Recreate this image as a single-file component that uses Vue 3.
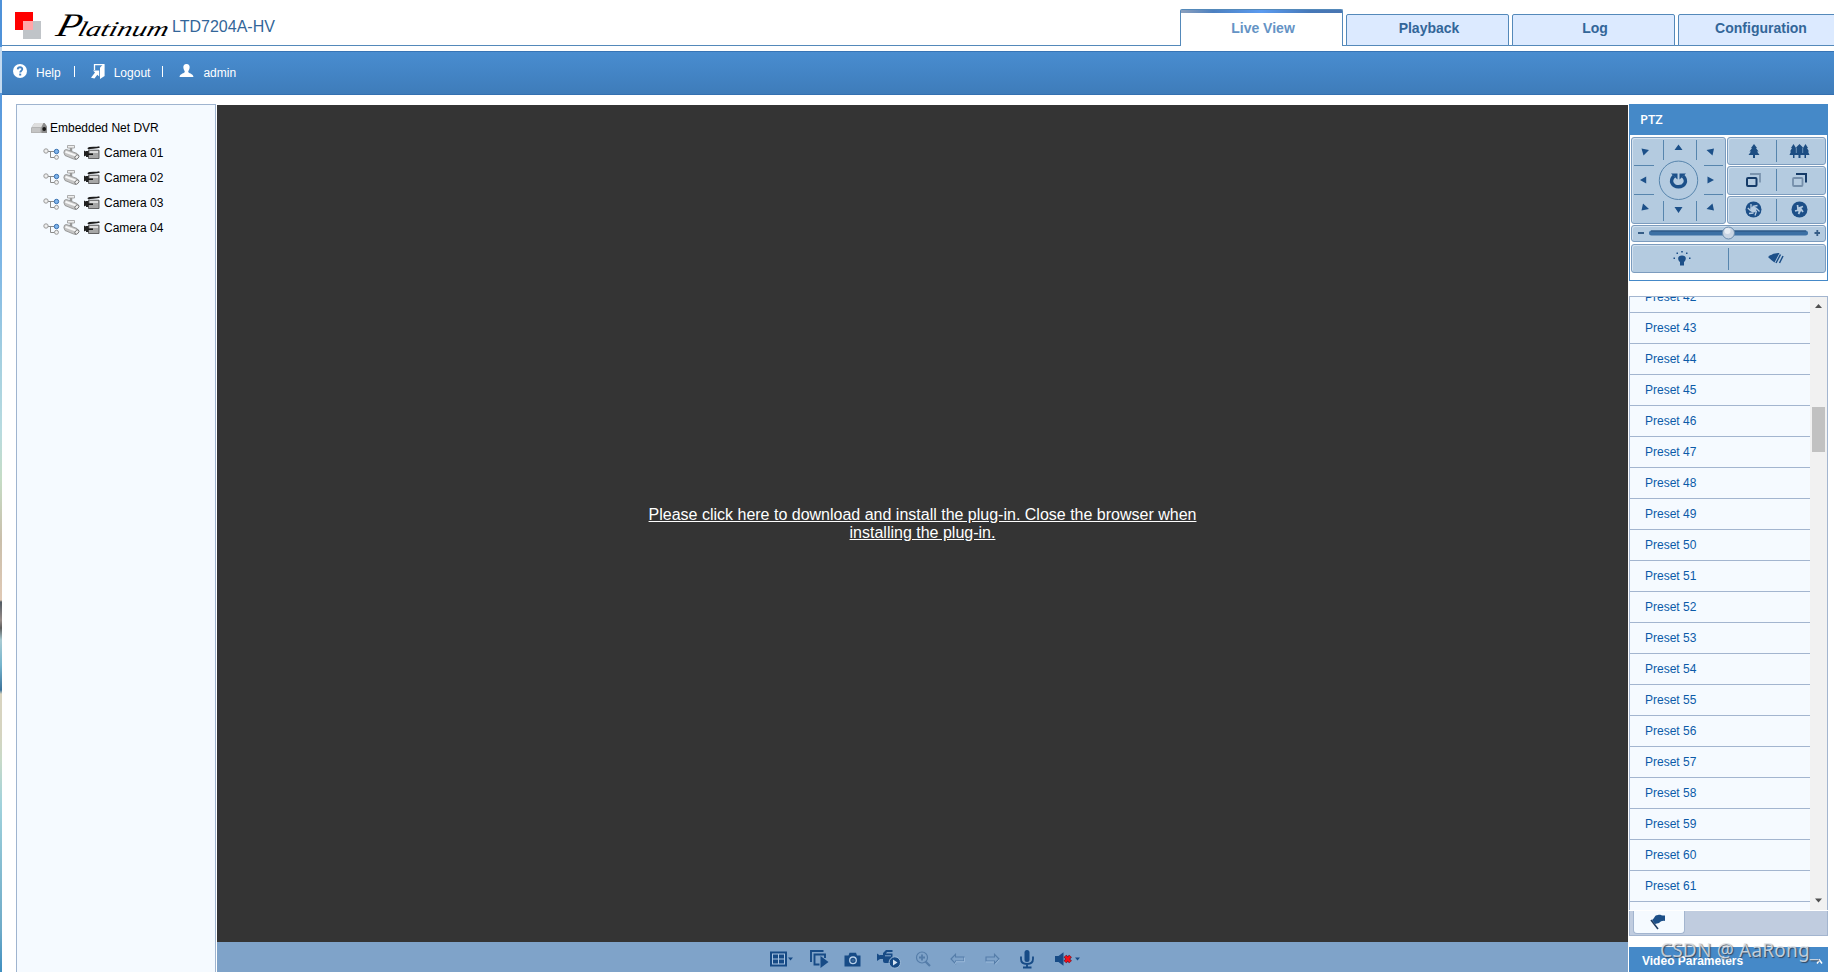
<script setup>
import { ref } from 'vue'

const tabs = ['Live View', 'Playback', 'Log', 'Configuration']
const activeTab = ref('Live View')

const cameras = ['Camera 01', 'Camera 02', 'Camera 03', 'Camera 04']

// Presets visible in the scrolled list
const presets = []
for (let i = 42; i <= 61; i++) {
  presets.push('Preset ' + i)
}
</script>

<template>
  <div class="screen">
    <div class="edge"></div>
    <div class="page">
      <header class="header">
        <div class="brand">
          <svg class="logo" width="27" height="27" viewBox="0 0 27 27">
            <rect width="18" height="18" fill="#ff0000" />
            <rect x="8" y="9" width="18" height="18" fill="#c0c4c8" />
            <rect x="8" y="9" width="10" height="9" fill="#ffa6a9" />
          </svg>
          <svg class="script" width="118" height="38" viewBox="0 0 118 38">
            <g transform="translate(8 0) skewX(-16)">
              <text x="3" y="29" font-size="33" textLength="24" lengthAdjust="spacingAndGlyphs">P</text>
              <text x="25" y="29" font-size="21" textLength="90" lengthAdjust="spacingAndGlyphs">latinum</text>
            </g>
          </svg>
          <span class="model">LTD7204A-HV</span>
        </div>
        <nav class="tabs">
          <a
            v-for="tab in tabs"
            :key="tab"
            class="tab"
            :class="{ active: tab === activeTab }"
            @click="activeTab = tab"
          >{{ tab }}</a>
        </nav>
      </header>

      <div class="menubar">
        <svg class="ic-help" width="14" height="14" viewBox="0 0 14 14">
          <circle cx="7" cy="7" r="7" fill="#fff" />
          <path d="M4.7 5.4C4.8 2.5 9.4 2.6 9.3 5.3C9.2 6.7 7.2 6.8 7.2 8.6" fill="none" stroke="#4484c4" stroke-width="1.8" />
          <rect x="6.2" y="9.6" width="2" height="1.9" fill="#4484c4" />
        </svg>
        <span class="help">Help</span>
        <i class="sep"></i>
        <svg class="ic-logout" width="14" height="15" viewBox="0 0 14 15">
          <path d="M3.5 6V.7H13" fill="none" stroke="#fff" stroke-width="1.3" />
          <path d="M13.6 0V12L9 15V3.500L12 .5Z" fill="#fff" />
          <path d="M2 6.500H8.200V12.500L6.300 10.800L3.500 14.500L0 13.800L4 8.500Z" fill="#fff" />
        </svg>
        <span class="logout">Logout</span>
        <i class="sep"></i>
        <svg class="ic-user" width="15" height="13" viewBox="0 0 15 13">
          <path d="M7.500 0C10 0 11 1.800 10.600 4C10.300 5.800 9.300 6.700 9.200 7.800C9.200 9.500 14 9.300 14.500 13H.5C1 9.300 5.800 9.500 5.800 7.800C5.700 6.700 4.700 5.800 4.400 4C4 1.800 5 0 7.500 0Z" fill="#fff" />
        </svg>
        <span>admin</span>
      </div>

      <main class="content">
        <!-- Device tree -->
        <aside class="tree">
          <div class="device">
            <svg width="17" height="12" viewBox="0 0 17 12">
              <path d="M3.500 1H13.500L16 4.500V11H0V6Z" fill="#b4b4b4" />
              <path d="M3.500 1H12.500L10.500 5H.8Z" fill="#dedede" />
              <path d="M2 6V10M4 6V10M6 6V10M8 6V10" stroke="#d4d4d4" />
              <path d="M12.500 1H13.500L16 4.500V11H10.500V5Z" fill="#8c8c8c" />
              <circle cx="13.200" cy="7" r="1.900" fill="#171717" />
            </svg>
            <span>Embedded Net DVR</span>
          </div>
          <div v-for="camera in cameras" :key="camera" class="camera">
            <svg width="17" height="14" viewBox="0 0 17 14">
              <path d="M5 5.500H12M7.500 5.500V11.500H12" fill="none" stroke="#8a8a8a" />
              <circle cx="3" cy="5" r="2.200" fill="#eee" stroke="#999" />
              <circle cx="13.500" cy="5.500" r="2.200" fill="#7fb4ec" stroke="#386fae" />
              <circle cx="13.500" cy="11.300" r="2" fill="#eee" stroke="#999" />
            </svg>
            <svg class="ic-cctv" width="17" height="16" viewBox="0 0 17 16">
              <path d="M4.500 .5H11.500V3H4.500Z" fill="#eee" stroke="#999" stroke-width=".8" />
              <path d="M8 3V6" stroke="#999" stroke-width="2.500" />
              <path d="M1.500 5.200Q3 4 5 5L14 8.500L16 11L13 14.500L10.500 14L2 10.500Q0 7.500 1.500 5.200Z" fill="#c4c4c4" stroke="#8a8a8a" stroke-width=".8" />
              <path d="M2.500 6.800L13 10.600" stroke="#f7f7f7" stroke-width="2" />
              <ellipse cx="13.900" cy="12" rx="1.700" ry="2.400" transform="rotate(40 13.900 12)" fill="#ececec" stroke="#666" stroke-width=".8" />
            </svg>
            <svg class="ic-rec" width="16" height="14" viewBox="0 0 16 14">
              <path d="M4 2.900C6 .8 11 2.600 15.500 1" fill="none" stroke="#1d1d1d" stroke-width="1.800" />
              <path d="M4.500 4.200H15V12.500H4.500Z" fill="#a6a6a6" stroke="#555" stroke-width=".9" />
              <path d="M6 5H14V7H6Z" fill="#dcdcdc" />
              <path d="M0 4.500L2 5.500V9.500L0 10.500ZM2 5H4.500V11H2Z" fill="#202020" />
              <path d="M4 8.200H9" stroke="#161616" stroke-width="1.600" />
            </svg>
            <span>{{ camera }}</span>
          </div>
        </aside>

        <section class="viewer">
          <div class="video">
            <a class="plugin">Please click here to download and install the plug-in. Close the browser when<br />installing the plug-in.</a>
          </div>
          <div class="toolbar">
            <svg width="24" height="16" viewBox="0 0 24 16">
              <rect y=".5" width="17" height="15" fill="#174b86" />
              <rect x="2.500" y="3" width="12" height="10" fill="none" stroke="#a9c4e2" />
              <path d="M8.500 3V13M2.500 8H14.500" stroke="#a9c4e2" />
              <path d="M18 6.500H23L20.500 9.500Z" fill="#174b86" />
            </svg>
            <svg width="19" height="18" viewBox="0 0 19 18">
              <path d="M1 12V1H13.500M9.500 14.500H4.500V4.500H15V8" fill="none" stroke="#174b86" stroke-width="1.900" />
              <path d="M10.500 6L18.500 12L10.500 18Z" fill="#174b86" />
            </svg>
            <svg width="17" height="15" viewBox="0 0 17 15">
              <path d="M1 3.500H4.500L5.500 .8H12L13 3.500H16.500V14.500H.5V3.500Z" fill="#174b86" />
              <circle cx="9" cy="8.300" r="3.300" fill="none" stroke="#b8d0e9" stroke-width="1.300" />
              <circle cx="9" cy="8.300" r="1.500" fill="#3c6898" />
            </svg>
            <svg width="24" height="20" viewBox="0 0 24 20">
              <path d="M0 4.500L3 6.500V10L0 12ZM3 6H6V10H3ZM6 4L9 1H15.500V3H10L9 4.500H15.500V14H8Q6 14 6 12Z" fill="#174b86" />
              <path d="M8 6.800H14" stroke="#87a8cc" />
              <circle cx="17.800" cy="13.500" r="5.700" fill="#174b86" stroke="#9ebbd9" />
              <path d="M16 10.500L20.500 13.500L16 16.500Z" fill="#d6e4f2" />
            </svg>
            <svg width="16" height="16" viewBox="0 0 16 16">
              <circle cx="7" cy="6.500" r="5.500" fill="none" stroke="#557da9" stroke-width="1.200" />
              <path d="M7 3.500V9.500M4 6.500H10" stroke="#557da9" stroke-width="1.800" />
              <path d="M10.500 10.500L15 15" stroke="#557da9" stroke-width="2.200" />
            </svg>
            <svg width="15" height="12" viewBox="0 0 15 12">
              <path d="M1 6L5.500 1.300V4H14V8H5.500V10.700Z" fill="none" stroke="#557da9" stroke-width="1.100" />
              <path d="M5 11.500L6 8.700H14.500V4.500" fill="none" stroke="#a5c1df" stroke-width=".8" />
            </svg>
            <svg width="15" height="12" viewBox="0 0 15 12">
              <path d="M14 6L9.500 1.300V4H1V8H9.500V10.700Z" fill="none" stroke="#557da9" stroke-width="1.100" />
              <path d="M1 9H9M10 11.500L14.500 6.600" fill="none" stroke="#a5c1df" stroke-width=".8" />
            </svg>
            <svg width="14" height="19" viewBox="0 0 14 19">
              <rect x="4.500" y="0" width="5" height="12" rx="2.500" fill="#174b86" />
              <path d="M1 6.500V9Q1 14 7 14T13 9V6.500M7 14V17.500M3 17.500H11.500" fill="none" stroke="#174b86" stroke-width="1.800" />
            </svg>
            <svg width="26" height="14" viewBox="0 0 26 14">
              <path d="M0 4H3.500L8.500 .3V13.700L3.500 10H0Z" fill="#174b86" />
              <path d="M10 4L15.500 10M15.500 4L10 10" stroke="#6e2238" stroke-width="3.800" />
              <path d="M10.300 4.300L15.200 9.700M15.200 4.300L10.300 9.700" stroke="#fa0d14" stroke-width="2.200" />
              <path d="M20 5.500H25L22.500 8.500Z" fill="#174b86" />
            </svg>
          </div>
        </section>

        <aside class="side">
          <section class="ptz">
            <h2>PTZ</h2>
            <div class="ptz-body">
              <div class="pads">
                <div class="box pad">
                  <svg width="93" height="85" viewBox="0 0 93 85">
                    <g stroke="#5785ad" fill="none">
                      <path d="M31.500 2V22M64.500 2V22M31.500 63V83M64.500 63V83M2 27.500H22M72 27.500H91M2 56.500H22M72 56.500H91" />
                      <circle cx="46.500" cy="42.300" r="19.200" />
                    </g>
                    <g fill="#1c5089">
                      <path d="M9.500 10.500L17 12L11.500 17.500ZM42.500 12L46.500 6.500L50.500 12ZM82 10.500L74.500 12L80.500 17.500ZM14.200 38.500V45.500L8 42ZM75.500 38.500V45.500L82 42ZM11 65.500L17 71L9.500 72.500ZM42.500 69H50.500L46.500 75ZM80.500 65.500L74.500 71L82 72.500Z" />
                    </g>
                    <path d="M42 38C37 43 40.500 48.800 46.500 48.800S56 43 51 38" fill="none" stroke="#1c5089" stroke-width="3.400" />
                    <path d="M39 35.500H45.500V41.500ZM54 35.500H47.500V41.500Z" fill="#1c5089" />
                  </svg>
                </div>
                <div class="lens">
                  <div class="box pair">
                    <span>
                      <svg width="12" height="14" viewBox="0 0 12 14">
                        <path d="M6 0L9 4H8L10.500 7.500H9L11.500 11H7V14H5V11H.5L3 7.500H1.500L4 4H3Z" fill="#1c4d82" />
                      </svg>
                    </span>
                    <span>
                      <svg width="21" height="14" viewBox="0 0 21 14">
                        <path d="M4.500 0L7 4L7.500 3L10.500 0L13.500 3L14 4L16.500 0L19 4H18L20 7.500H19L20.500 11H17V14H15.500V11H11.500V14H9.500V11H5.500V14H4V11H.5L2 7.500H1L3 4H2Z" fill="#1c4d82" />
                        <path d="M7.300 4V9M13.700 4V9" stroke="#6d94ba" />
                      </svg>
                    </span>
                  </div>
                  <div class="box pair">
                    <span>
                      <svg width="15" height="14" viewBox="0 0 15 14">
                        <path d="M4 1H14V9.500" fill="none" stroke="#7b94ae" stroke-width="1.800" />
                        <rect x="1" y="5" width="9.500" height="8" rx="1" fill="none" stroke="#153b68" stroke-width="2" />
                      </svg>
                    </span>
                    <span>
                      <svg width="15" height="14" viewBox="0 0 15 14">
                        <path d="M4 1H14V9.500" fill="none" stroke="#153b68" stroke-width="2" />
                        <rect x="1" y="5" width="9.500" height="8" rx="1" fill="none" stroke="#758fab" stroke-width="1.800" />
                      </svg>
                    </span>
                  </div>
                  <div class="box pair">
                    <span>
                      <svg width="17" height="17" viewBox="0 0 17 17">
                        <circle cx="8.500" cy="8.500" r="8" fill="#1c4f88" />
                        <circle cx="8.500" cy="8.500" r="3" fill="#b5cbe1" />
                        <path d="M6 8.500L6 3M7.500 5.500L12.500 4.500M11 7L14.500 10.500M11.500 10L10 14.500M8.500 12L4 12.500M6 10L2.800 7" stroke="#b5cbe1" stroke-width="1.300" />
                      </svg>
                    </span>
                    <span>
                      <svg width="17" height="17" viewBox="0 0 17 17">
                        <circle cx="8.500" cy="8.500" r="8" fill="#1c4f88" />
                        <circle cx="8.500" cy="8.500" r="2.400" fill="#b5cbe1" />
                        <path d="M7 8L6.500 4M8 7L12 5.500M10 8L12 11M9 10L7.500 13M8 9L4 10" stroke="#b5cbe1" stroke-width="1.700" />
                      </svg>
                    </span>
                  </div>
                </div>
              </div>
              <div class="box slider">
                <svg width="193" height="15" viewBox="0 0 193 15">
                  <path d="M6 8H12M182.500 8H188M185.300 5V11" stroke="#365d86" stroke-width="1.800" />
                  <rect x="17" y="5.500" width="159" height="5" rx="2.500" fill="#3c70a4" />
                  <path d="M19 6H174" stroke="#264e7b" />
                  <circle cx="96.500" cy="8" r="6" fill="#c9d5e3" stroke="#6b8cad" />
                  <circle cx="95.500" cy="6" r="3" fill="#e7edf4" />
                </svg>
              </div>
              <div class="box pair aux">
                <span>
                  <svg width="18" height="15" viewBox="0 0 18 15">
                    <path d="M9 4.500C14 4.500 13.500 9 11 11V14.500H7V11C4.500 9 4 4.500 9 4.500Z" fill="#1c4f88" />
                    <path d="M8.200 0H9.800V1.600H8.200ZM3.500 1.500H5V3H3.500ZM13 1.500H14.500V3H13ZM.5 6.500H2V8H.5ZM16 6.500H17.500V8H16Z" fill="#1c4f88" />
                  </svg>
                </span>
                <span>
                  <svg width="16" height="12" viewBox="0 0 16 12">
                    <path d="M0 5Q5 .5 11.500 1L6.500 10.500Q3 8 0 5Z" fill="#1c4f88" />
                    <path d="M8 11L12.500 2.500M11.500 11L15 4" stroke="#1c4f88" stroke-width="1.500" />
                  </svg>
                </span>
              </div>
            </div>
          </section>

          <section class="presets">
            <ul>
              <li v-for="preset in presets" :key="preset">{{ preset }}</li>
            </ul>
            <div class="scrollbar">
              <svg width="17" height="17" viewBox="0 0 17 17"><path d="M5 11L8.500 7L12 11Z" fill="#505050" /></svg>
              <div class="thumb"></div>
              <svg width="17" height="17" viewBox="0 0 17 17"><path d="M5 5.500H12L8.500 9.500Z" fill="#505050" /></svg>
            </div>
          </section>

          <div class="side-tabs">
            <div class="side-tab">
              <svg width="16" height="16" viewBox="0 0 16 16">
                <path d="M1 6L8 15" stroke="#203c60" stroke-width="1.600" />
                <path d="M2 6C5 4.500 4 1 8 1C10.500 .3 12 2 15 1.500V7C12 6.500 11 7.500 9 9L5 10Z" fill="#1c4f88" />
              </svg>
            </div>
          </div>

          <div class="params">
            <span>Video Parameters</span>
            <svg width="7" height="7" viewBox="0 0 7 7"><path d="M1 5.500L3.500 2L6 5.500" fill="none" stroke="#fff" stroke-width="1.500" /></svg>
          </div>
        </aside>
      </main>
    </div>
    <div class="watermark">CSDN @ AaRong_</div>
  </div>
</template>

<style>
body {
  margin: 0;
  overflow: hidden;
}
</style>

<style scoped>
.screen {
  position: relative;
  display: flex;
  width: 1834px;
  height: 972px;
  overflow: hidden;
  background: #fff;
  font-family: "Liberation Sans", Arial, sans-serif;
  font-size: 12px;
}

svg {
  display: block;
  flex: none;
}

/* Desktop showing at the window edge */
.edge {
  width: 2px;
  flex: none;
  background: linear-gradient(#4f92d9 0 47px, #c3daf0 47px 93px, #5798dc 93px, #7db6e5 260px, #a5d0e0 360px, #b8dbe0 430px, #c5dcc5 480px, #cabfab 540px, #e0c9b5 600px, #515b64 602px, #988d89 620px, #5d5d5d 628px, #a9cbd3 640px, #75b5cd 665px, #3d739b 690px, #d9d4c0 694px, #d5d4c0 735px, #c8dac8 760px, #a0d2dc 805px, #88bfd2 860px, #6fabc8 930px, #3f8fc0 972px);
}

.page {
  flex: 1;
  min-width: 0;
}

.header {
  display: flex;
  justify-content: space-between;
  height: 46px;
  box-sizing: border-box;
  background: linear-gradient(#5489ba, #5489ba) bottom / 100% 1px no-repeat;
}

.brand {
  display: flex;
  padding-left: 13px;
}

.logo {
  margin-top: 12px;
}

.script {
  margin: 7px 0 0 10px;
  overflow: visible;
  font-family: "Liberation Serif", cursive;
  font-style: italic;
}

.model {
  margin-left: 2px;
  font-size: 16px;
  line-height: 53px;
  color: #336699;
}

.tabs {
  display: flex;
  align-items: flex-end;
  gap: 3px;
  margin-right: -7px;
}

.tab {
  width: 163px;
  height: 32px;
  box-sizing: border-box;
  padding: 0 0 3px 3px;
  border: 1px solid #5489ba;
  border-radius: 2px 2px 0 0;
  background: #dceaff;
  color: #336699;
  font-size: 14px;
  font-weight: bold;
  line-height: 27px;
  text-align: center;
}

.tab.active {
  height: 37px;
  padding-top: 5px;
  border-bottom: 0;
  color: #6593c5;
  background: linear-gradient(90deg, #8ca0bd, #4c80c0 20%, #5b9bf0 50%, #4678b8 80%, #4975b1) top / 100% 3px no-repeat #fff;
}

.menubar {
  display: flex;
  align-items: center;
  height: 44px;
  margin-top: 5px;
  box-sizing: border-box;
  padding: 0 0 1px 11px;
  border-top: 1px solid #3774b5;
  border-bottom: 1px solid #3470b0;
  background: linear-gradient(#498dd0, #3e7cba);
  color: #fff;
}

.help {
  margin-left: 9px;
}

.logout {
  margin-left: 9px;
}

.menubar span {
  padding-top: 1px;
}

.ic-help {
  margin-top: -3px;
}

.ic-logout {
  margin: -2px 0 0 16px;
}

.ic-user {
  margin: -4px 9px 0 16px;
}

.sep {
  width: 1px;
  height: 11px;
  margin: -3px 0 0 13px;
  background: #fff;
}

.logout + .sep {
  margin-left: 12px;
}

.content {
  display: flex;
  height: 877px;
  padding: 9px 0 0 14px;
  box-sizing: border-box;
}

.tree {
  width: 200px;
  flex: none;
  box-sizing: border-box;
  padding: 10px 0 0 14px;
  border: 1px solid #9fb4cf;
  border-bottom: 0;
  background: #f5faff;
}

.device,
.camera {
  display: flex;
  align-items: center;
  height: 25px;
}

.device {
  gap: 2px;
}

.camera {
  padding-left: 12px;
}

.camera span {
  margin-left: 4px;
}

.ic-cctv {
  margin-left: 3px;
}

.ic-rec {
  margin-left: 4px;
}

.viewer {
  display: flex;
  flex-direction: column;
  width: 1411px;
  flex: none;
  margin: 1px 0 0 1px;
}

.video {
  display: flex;
  align-items: center;
  justify-content: center;
  flex: 1;
  background: #343434;
}

.plugin {
  color: #fff;
  font-size: 16px;
  line-height: 18px;
  text-align: center;
  text-decoration: underline;
}

.toolbar {
  display: flex;
  align-items: center;
  height: 30px;
  padding: 4px 0 0 553px;
  box-sizing: border-box;
  background: #7fa3c9;
}

.toolbar svg:nth-child(2) { margin-left: 16px; }
.toolbar svg:nth-child(3) { margin-left: 15px; }
.toolbar svg:nth-child(4) { margin-left: 16px; }
.toolbar svg:nth-child(5) { margin-left: 14px; }
.toolbar svg:nth-child(6) { margin-left: 19px; }
.toolbar svg:nth-child(7) { margin-left: 20px; }
.toolbar svg:nth-child(8) { margin-left: 20px; }
.toolbar svg:nth-child(9) { margin-left: 21px; }

.side {
  width: 199px;
  flex: none;
  margin-left: 1px;
}

.ptz {
  height: 177px;
  box-sizing: border-box;
  border: 1px solid #4589c8;
}

.ptz h2 {
  height: 30px;
  margin: 0;
  padding-left: 10px;
  background: #4589c8;
  color: #fff;
  font: 600 13px/29px "Open Sans", sans-serif;
}

.ptz-body {
  display: flex;
  flex-direction: column;
  gap: 1px;
  padding: 2px 1px 0 1px;
}

.pads {
  display: flex;
  gap: 1px;
}

.box {
  box-sizing: border-box;
  border: 1px solid #7c9cbe;
  border-radius: 3px;
  background: #b4cbe0;
  box-shadow: inset 1px 1px 0 #d3e1ee;
}

.pad {
  width: 95px;
  height: 87px;
}

.lens {
  display: flex;
  flex: 1;
  flex-direction: column;
  gap: 1px;
}

.pair {
  display: flex;
  flex: 1;
  align-items: center;
}

.pair span {
  display: flex;
  flex: 1;
  align-items: center;
  justify-content: center;
  height: 22px;
  box-sizing: border-box;
  padding: 0 3px 1px 0;
}

.pair span:first-child {
  flex: none;
  width: 49px;
  padding: 0 0 1px 3px;
  border-right: 1px solid #5785ad;
}

.slider {
  height: 17px;
}

.slider svg {
  margin-top: -1px;
}

.aux {
  flex: none;
  height: 29px;
  margin-top: 1px;
}

.aux span:first-child {
  width: 97px;
}

.presets {
  display: flex;
  height: 614px;
  margin-top: 15px;
  box-sizing: border-box;
  border: 1px solid #a3b5cf;
  border-bottom: 0;
  overflow: hidden;
  background: #f5faff;
}

.presets ul {
  flex: 1;
  margin: -15px 0 0;
  padding: 0;
  list-style: none;
}

.presets li {
  height: 31px;
  box-sizing: border-box;
  padding-left: 15px;
  border-bottom: 1px solid #a3b5cf;
  color: #0b5aa8;
  line-height: 31px;
}

.scrollbar {
  display: flex;
  flex-direction: column;
  justify-content: space-between;
  width: 17px;
  background: #f1f1f1;
}

.thumb {
  height: 45px;
  margin: 93px 2px auto;
  background: #c1c1c1;
}

.side-tabs {
  height: 25px;
  margin-top: 1px;
  box-sizing: border-box;
  padding-left: 3px;
  border: 1px solid #a3b5cf;
  border-top: 0;
  background: #c0ccdf;
}

.side-tab {
  display: flex;
  align-items: center;
  justify-content: center;
  width: 52px;
  height: 23px;
  box-sizing: border-box;
  padding-right: 2px;
  border: 1px solid #a3b5cf;
  border-top: 0;
  border-radius: 0 0 4px 4px;
  background: #f5faff;
}

.params {
  display: flex;
  align-items: center;
  justify-content: space-between;
  height: 30px;
  margin-top: 11px;
  padding: 0 5px 2px 13px;
  box-sizing: border-box;
  background: #4589c8;
  color: #fff;
  font-weight: bold;
}

/* Author mark laid over the corner */
.watermark {
  position: absolute;
  left: 1660px;
  top: 937px;
  color: rgba(225, 228, 232, 0.82);
  font: 19px/26px "Noto Sans", sans-serif;
  letter-spacing: 0.2px;
  white-space: nowrap;
  text-shadow: 1px 1px 1px rgba(45, 55, 70, 0.8);
}
</style>
